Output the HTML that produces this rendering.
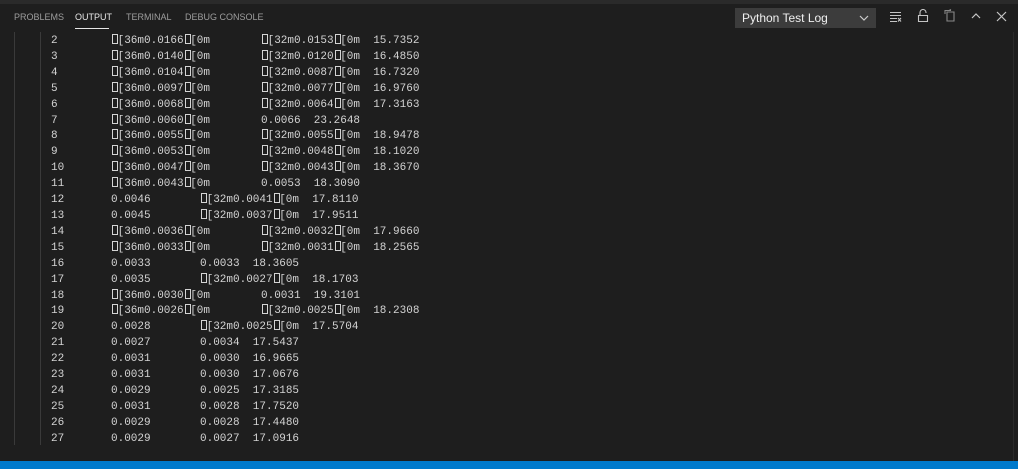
<!DOCTYPE html>
<html><head><meta charset="utf-8"><style>
body{margin:0;width:1018px;height:469px;background:#1e1e1e;overflow:hidden;position:relative;font-family:"Liberation Sans",sans-serif}
.top{position:absolute;left:0;top:0;width:1018px;height:4px;background:#2a2a2a}
.tabs{position:absolute;top:4px;left:0;width:1018px;height:27px}
.tab{position:absolute;top:8px;font-size:9px;color:#9d9d9d}
.act{color:#e7e7e7}
.ul{position:absolute;left:75px;top:24px;width:34px;height:1px;background:#e7e7e7}
.dd{position:absolute;left:735px;top:8px;width:141px;height:20px;background:#3c3c3c;color:#f0f0f0;font-size:12px;line-height:20px;box-sizing:border-box;padding-left:7px}
.out{position:absolute;left:0;top:34px;width:1018px;font-family:"Liberation Mono",monospace;font-size:11px;color:#d4d4d4}
.r{position:relative;height:15.92px;line-height:15.92px;white-space:pre}
.r span{position:absolute;top:0}
.n{left:51px}.a{left:111px}.c{left:200px}.d{left:261px}
i{display:inline-block;width:6.6px;height:10px;position:relative;font-style:normal;vertical-align:-1px}
i:after{content:"";position:absolute;left:1px;top:0px;width:4px;height:8px;border:1px solid #d4d4d4}
.g1{position:absolute;left:14px;top:32px;width:1px;height:413px;background:#3a3a3a}
.g2{position:absolute;left:40px;top:32px;width:1px;height:413px;background:#3a3a3a}
.sb{position:absolute;left:0;top:461px;width:1018px;height:8px;background:#007acc}
.vr{position:absolute;left:1013px;top:32px;width:1px;height:429px;background:#2b2b2b}
</style></head><body>
<div class="top"></div>
<div class="tabs">
<span class="tab" style="left:14px">PROBLEMS</span>
<span class="tab act" style="left:75px">OUTPUT</span>
<span class="tab" style="left:126px">TERMINAL</span>
<span class="tab" style="left:185px">DEBUG CONSOLE</span>
<div class="ul"></div>
</div>
<div class="dd">Python Test Log
<svg style="position:absolute;right:7px;top:6px" width="10" height="8" viewBox="0 0 10 8"><path d="M1 2 L5 6 L9 2" stroke="#ccc" fill="none" stroke-width="1.2"/></svg></div>
<svg style="position:absolute;left:889px;top:11px" width="14" height="12" viewBox="0 0 14 12"><path d="M1 1.5H12M1 4.5H12M1 7.5H8M1 10.5H8M9 7l3 3.5M12 7l-3 3.5" stroke="#c5c5c5" fill="none" stroke-width="1.1"/></svg>
<svg style="position:absolute;left:917px;top:9px" width="12" height="14" viewBox="0 0 12 14"><path d="M3 6V3.5a3 3 0 0 1 6 0V4M1.5 6.5h9v6h-9z" stroke="#c5c5c5" fill="none" stroke-width="1.1"/></svg>
<svg style="position:absolute;left:943px;top:9px" width="14" height="14" viewBox="0 0 14 14"><path d="M4 3h7v9H4zM2 5V1.5h6M6 1.5l2-1" stroke="#888" fill="none" stroke-width="1.1"/></svg>
<svg style="position:absolute;left:970px;top:12px" width="12" height="8" viewBox="0 0 12 8"><path d="M2 6L6 2L10 6" stroke="#c5c5c5" fill="none" stroke-width="1.2"/></svg>
<svg style="position:absolute;left:996px;top:11px" width="11" height="11" viewBox="0 0 11 11"><path d="M1 1L10 10M10 1L1 10" stroke="#c5c5c5" fill="none" stroke-width="1.2"/></svg>
<div class="g1"></div><div class="g2"></div><div class="vr"></div>
<div class="out">
<div class="r"><span class="n">2</span><span class="a"><i></i>[36m0.0166<i></i>[0m</span><span class="d"><i></i>[32m0.0153<i></i>[0m  15.7352</span></div>
<div class="r"><span class="n">3</span><span class="a"><i></i>[36m0.0140<i></i>[0m</span><span class="d"><i></i>[32m0.0120<i></i>[0m  16.4850</span></div>
<div class="r"><span class="n">4</span><span class="a"><i></i>[36m0.0104<i></i>[0m</span><span class="d"><i></i>[32m0.0087<i></i>[0m  16.7320</span></div>
<div class="r"><span class="n">5</span><span class="a"><i></i>[36m0.0097<i></i>[0m</span><span class="d"><i></i>[32m0.0077<i></i>[0m  16.9760</span></div>
<div class="r"><span class="n">6</span><span class="a"><i></i>[36m0.0068<i></i>[0m</span><span class="d"><i></i>[32m0.0064<i></i>[0m  17.3163</span></div>
<div class="r"><span class="n">7</span><span class="a"><i></i>[36m0.0060<i></i>[0m</span><span class="d">0.0066  23.2648</span></div>
<div class="r"><span class="n">8</span><span class="a"><i></i>[36m0.0055<i></i>[0m</span><span class="d"><i></i>[32m0.0055<i></i>[0m  18.9478</span></div>
<div class="r"><span class="n">9</span><span class="a"><i></i>[36m0.0053<i></i>[0m</span><span class="d"><i></i>[32m0.0048<i></i>[0m  18.1020</span></div>
<div class="r"><span class="n">10</span><span class="a"><i></i>[36m0.0047<i></i>[0m</span><span class="d"><i></i>[32m0.0043<i></i>[0m  18.3670</span></div>
<div class="r"><span class="n">11</span><span class="a"><i></i>[36m0.0043<i></i>[0m</span><span class="d">0.0053  18.3090</span></div>
<div class="r"><span class="n">12</span><span class="a">0.0046</span><span class="c"><i></i>[32m0.0041<i></i>[0m  17.8110</span></div>
<div class="r"><span class="n">13</span><span class="a">0.0045</span><span class="c"><i></i>[32m0.0037<i></i>[0m  17.9511</span></div>
<div class="r"><span class="n">14</span><span class="a"><i></i>[36m0.0036<i></i>[0m</span><span class="d"><i></i>[32m0.0032<i></i>[0m  17.9660</span></div>
<div class="r"><span class="n">15</span><span class="a"><i></i>[36m0.0033<i></i>[0m</span><span class="d"><i></i>[32m0.0031<i></i>[0m  18.2565</span></div>
<div class="r"><span class="n">16</span><span class="a">0.0033</span><span class="c">0.0033  18.3605</span></div>
<div class="r"><span class="n">17</span><span class="a">0.0035</span><span class="c"><i></i>[32m0.0027<i></i>[0m  18.1703</span></div>
<div class="r"><span class="n">18</span><span class="a"><i></i>[36m0.0030<i></i>[0m</span><span class="d">0.0031  19.3101</span></div>
<div class="r"><span class="n">19</span><span class="a"><i></i>[36m0.0026<i></i>[0m</span><span class="d"><i></i>[32m0.0025<i></i>[0m  18.2308</span></div>
<div class="r"><span class="n">20</span><span class="a">0.0028</span><span class="c"><i></i>[32m0.0025<i></i>[0m  17.5704</span></div>
<div class="r"><span class="n">21</span><span class="a">0.0027</span><span class="c">0.0034  17.5437</span></div>
<div class="r"><span class="n">22</span><span class="a">0.0031</span><span class="c">0.0030  16.9665</span></div>
<div class="r"><span class="n">23</span><span class="a">0.0031</span><span class="c">0.0030  17.0676</span></div>
<div class="r"><span class="n">24</span><span class="a">0.0029</span><span class="c">0.0025  17.3185</span></div>
<div class="r"><span class="n">25</span><span class="a">0.0031</span><span class="c">0.0028  17.7520</span></div>
<div class="r"><span class="n">26</span><span class="a">0.0029</span><span class="c">0.0028  17.4480</span></div>
<div class="r"><span class="n">27</span><span class="a">0.0029</span><span class="c">0.0027  17.0916</span></div>
</div>
<div class="sb"></div>
</body></html>
